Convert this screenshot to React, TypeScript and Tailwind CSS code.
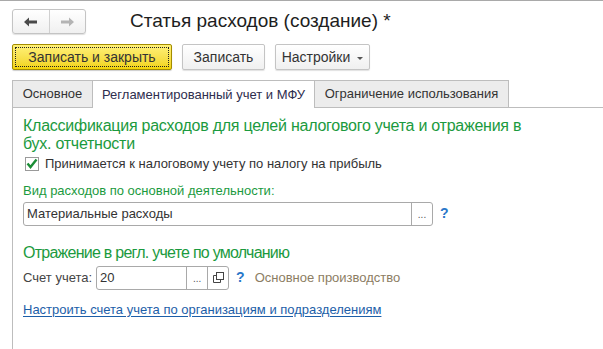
import React from 'react';

const green = 'text-[#1b9a3e]';

function Arrow({ dir, color }: { dir: 'left' | 'right'; color: string }) {
  return (
    <svg width="14" height="10" viewBox="0 0 14 10">
      {dir === 'left' ? (
        <path d="M0 5 L5 0.5 L5 3.5 L13 3.5 L13 6.5 L5 6.5 L5 9.5 Z" fill={color} />
      ) : (
        <path d="M14 5 L9 0.5 L9 3.5 L1 3.5 L1 6.5 L9 6.5 L9 9.5 Z" fill={color} />
      )}
    </svg>
  );
}

function CopyIcon() {
  return (
    <svg width="11" height="11" viewBox="0 0 11 11" fill="none" stroke="#444" strokeWidth="1">
      <rect x="3.5" y="0.5" width="7" height="7" />
      <path d="M3.5 3.5 H0.5 V10.5 H7.5 V7.5" />
    </svg>
  );
}

export default function App() {
  return (
    <div className="w-[603px] h-[349px] bg-white border-t border-[#a9a9a9] overflow-hidden text-[#333] font-['Liberation_Sans',Arial,sans-serif]">
      {/* Заголовок окна */}
      <div className="flex items-center h-[33px] pt-[8px] pl-[12px]">
        <div className="flex h-[25px] w-[74px] rounded-[3px] border border-[#c4c4c4] bg-gradient-to-b from-white to-[#f0f0f0] shadow-[0_1px_1px_rgba(0,0,0,0.12)]">
          <div className="flex-1 flex items-center justify-center border-r border-[#d0d0d0]">
            <Arrow dir="left" color="#4a4a4a" />
          </div>
          <div className="flex-1 flex items-center justify-center">
            <Arrow dir="right" color="#b4b4b4" />
          </div>
        </div>
        <h1 className="ml-[44px] text-[19px] leading-none text-[#1e1e1e] -mt-[2px]">Статья расходов (создание) *</h1>
      </div>

      {/* Командная панель */}
      <div className="flex items-center gap-[10px] pl-[12px] mt-[10px]">
        <button className="h-[26px] w-[160px] rounded-[2px] border border-[#a38c00] bg-gradient-to-b from-[#fff176] to-[#f2d300] p-[2px] shadow-[0_1px_1px_rgba(0,0,0,0.2)]">
          <div className="h-full w-full border border-dotted border-[#222] flex items-center justify-center text-[14px] text-[#333]">
            Записать и закрыть
          </div>
        </button>
        <button className="h-[26px] w-[83px] rounded-[2px] border border-[#c4c4c4] bg-gradient-to-b from-white to-[#f0f0f0] text-[14px] text-[#333] shadow-[0_1px_1px_rgba(0,0,0,0.12)]">
          Записать
        </button>
        <button className="h-[26px] w-[95px] rounded-[2px] border border-[#c4c4c4] bg-gradient-to-b from-white to-[#f0f0f0] text-[14px] text-[#333] shadow-[0_1px_1px_rgba(0,0,0,0.12)] flex items-center justify-center gap-[7px]">
          Настройки
          <span className="w-0 h-0 border-l-[3px] border-r-[3px] border-t-[3px] border-l-transparent border-r-transparent border-t-[#555] mt-[2px]" />
        </button>
      </div>

      {/* Вкладки */}
      <div className="flex items-end pl-[12px] mt-[10px] h-[28px]">
        <div className="h-[28px] w-[81px] border border-[#bdbdbd] bg-[#ececec] flex items-center justify-center text-[13px] text-[#333]">
          Основное
        </div>
        <div className="h-[28px] w-[222px] border-t border-r border-[#bdbdbd] bg-white flex items-center justify-center text-[13px] text-[#2e2e4e]">
          Регламентированный учет и МФУ
        </div>
        <div className="h-[28px] w-[194px] border-t border-r border-b border-[#bdbdbd] bg-[#ececec] flex items-center justify-center text-[13px] text-[#333]">
          Ограничение использования
        </div>
        <div className="flex-1 border-b border-[#bdbdbd]" />
      </div>

      {/* Содержимое вкладки */}
      <div className="ml-[12px] border-l border-[#bdbdbd] h-[300px] pl-[10px] pt-[9px]">
        <div className={`w-[520px] text-[16px] tracking-[-0.25px] leading-[18px] ${green}`}>
          Классификация расходов для целей налогового учета и отражения в бух. отчетности
        </div>

        <label className="flex items-center gap-[6px] mt-[1px] ml-[2px] text-[13px] text-[#333]">
          <span className="w-[14px] h-[14px] border border-[#9a9a9a] bg-white flex items-center justify-center">
            <svg width="12" height="11" viewBox="0 0 12 11">
              <path d="M1.5 5.5 L4.5 9 L10.5 1.5" fill="none" stroke="#1a8d35" strokeWidth="2.4" />
            </svg>
          </span>
          Принимается к налоговому учету по налогу на прибыль
        </label>

        <div className={`mt-[9px] text-[13px] leading-[15px] ${green}`}>Вид расходов по основной деятельности:</div>

        <div className="flex items-center mt-[4px]">
          <div className="flex h-[24px] w-[410px] rounded-[3px] border border-[#a9a9a9] bg-white">
            <div className="flex-1 flex items-center px-[3px] text-[13px] text-[#333]">Материальные расходы</div>
            <div className="w-[21px] border-l border-[#a9a9a9] flex items-end justify-center pb-[5px] text-[10px] leading-none text-[#555]">...</div>
          </div>
          <span className="ml-[7px] text-[14px] font-bold text-[#2a77c9]">?</span>
        </div>

        <div className={`mt-[18px] text-[16px] tracking-[-0.75px] leading-[18px] ${green}`}>Отражение в регл. учете по умолчанию</div>

        <div className="flex items-center mt-[4px] text-[13px]">
          <span className="text-[#444]">Счет учета:</span>
          <div className="flex h-[24px] w-[133px] ml-[4px] rounded-[3px] border border-[#a9a9a9] bg-white">
            <div className="flex-1 flex items-center px-[3px] text-[#333]">20</div>
            <div className="w-[21px] border-l border-[#a9a9a9] flex items-end justify-center pb-[5px] text-[10px] leading-none text-[#555]">...</div>
            <div className="w-[21px] border-l border-[#a9a9a9] flex items-center justify-center">
              <CopyIcon />
            </div>
          </div>
          <span className="ml-[7px] text-[14px] font-bold text-[#2a77c9]">?</span>
          <span className="ml-[10px] text-[#8c7d63]">Основное производство</span>
        </div>

        <a href="#" className="block mt-[12px] text-[13px] leading-[15px] text-[#1c5ea8] underline underline-offset-[2px]">
          Настроить счета учета по организациям и подразделениям
        </a>
      </div>
    </div>
  );
}
